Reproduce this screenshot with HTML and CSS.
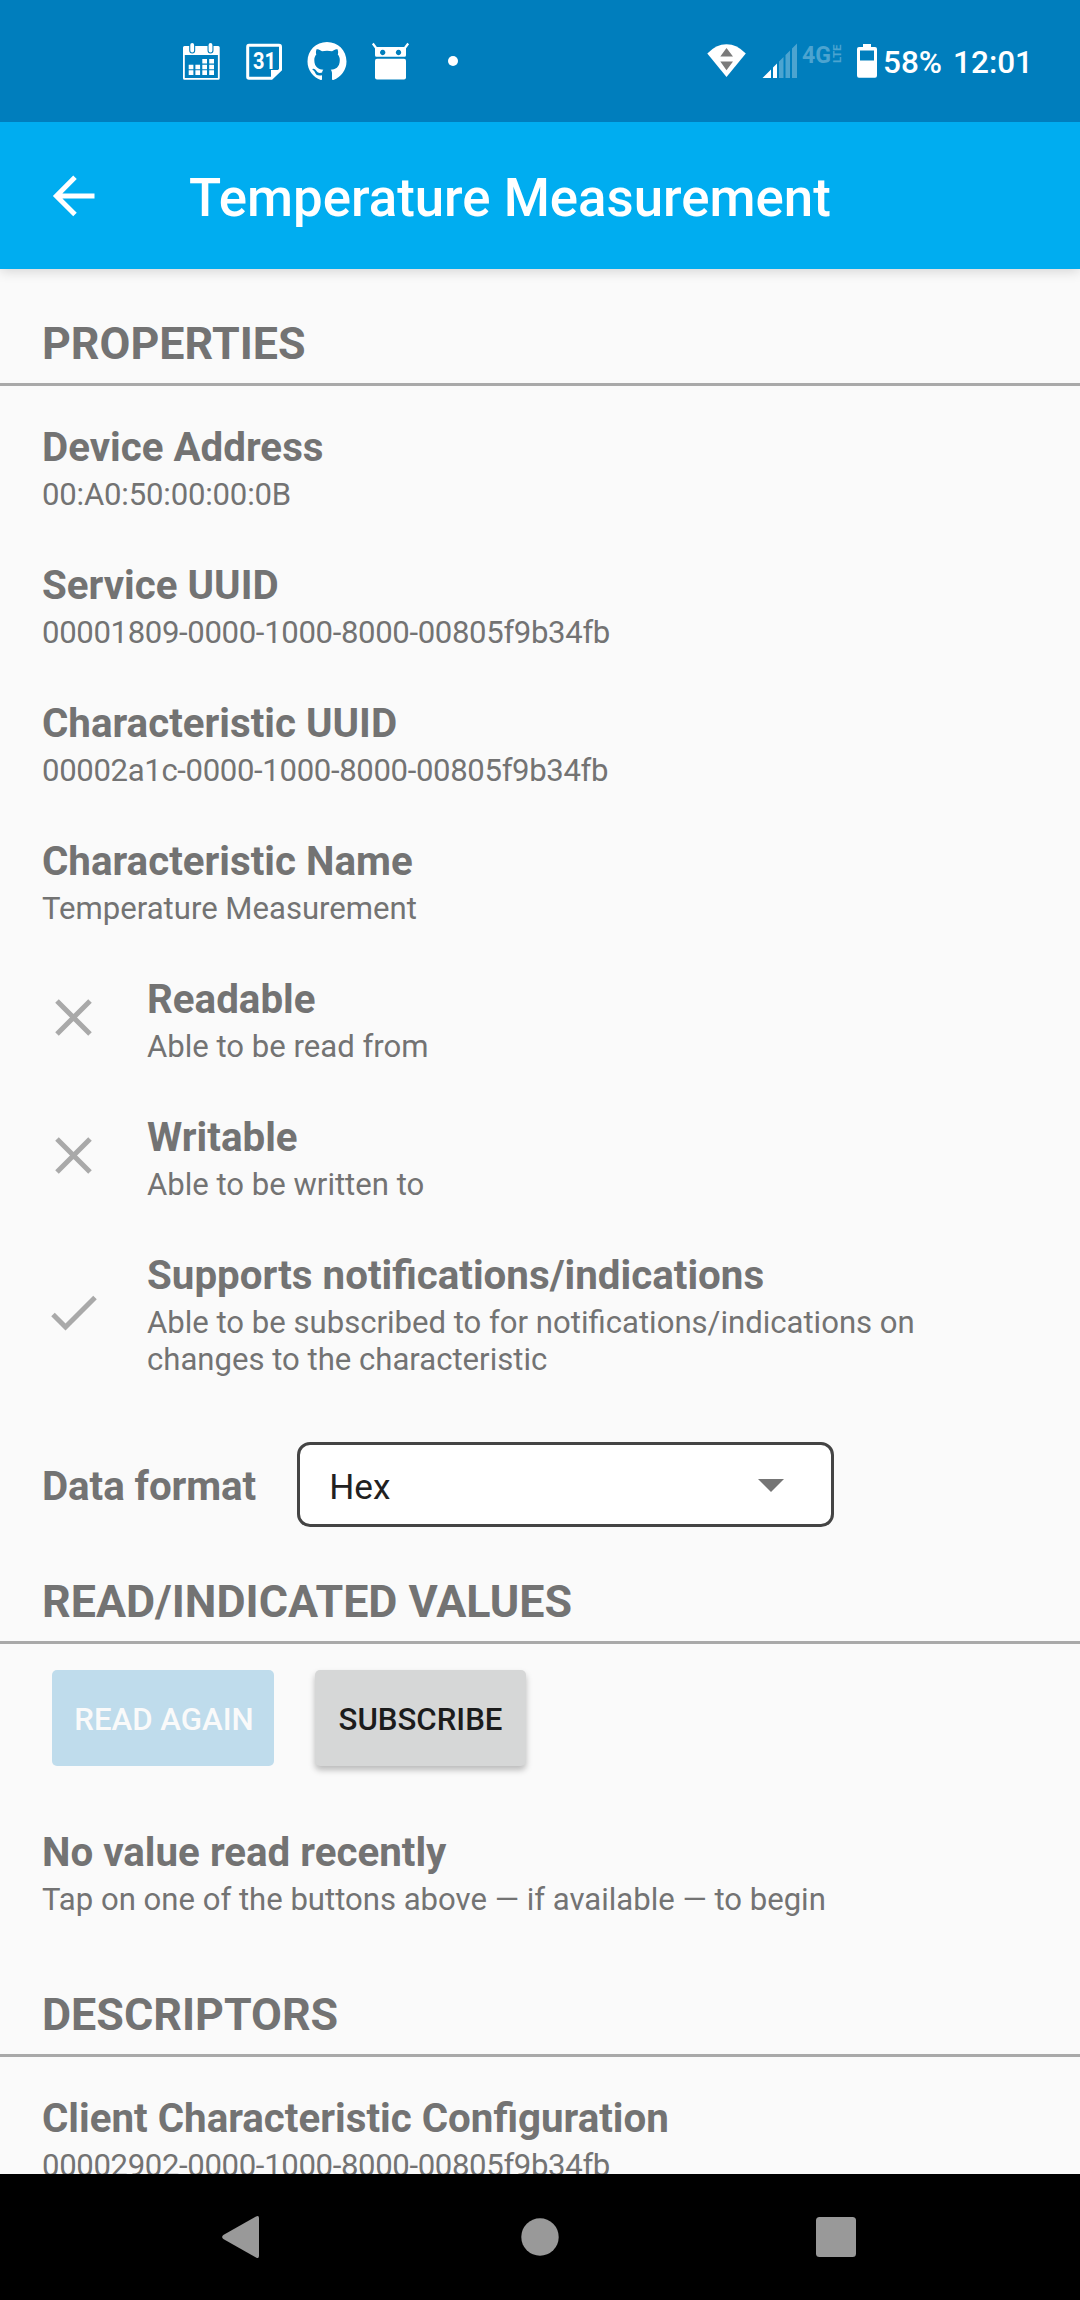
FILE: index.html
```html
<!DOCTYPE html>
<html lang="en">
<head>
<meta charset="utf-8">
<title>Temperature Measurement</title>
<link rel="stylesheet" href="styles.css">
</head>
<body>
<div class="screen">
  <div class="status-bar">
    <div class="notifications">
      <svg width="40" height="40" viewBox="0 0 40 40">
        <path fill="#fff" fill-rule="evenodd" d="M3.500 5H37.200Q38.700 5 38.700 6.500V37.200Q38.700 38.700 37.200 38.700H3.500Q2 38.700 2 37.200V6.500Q2 5 3.500 5ZM3.800 14V37H36.900V14Z"/>
        <path fill="#fff" d="M21.300 18H26v4.500h-4.700zM28.200 18H33v4.500h-4.800zM7.700 23.700h4.700v4.500H7.700zM14.400 23.700h4.700v4.500h-4.700zM21.300 23.700H26v4.500h-4.700zM28.200 23.700H33v4.500h-4.800zM7.700 29.300h4.700V34H7.700zM14.400 29.300h4.700V34h-4.700zM21.300 29.300H26V34h-4.700zM28.200 29.300H33V34h-4.800z"/>
        <path d="M11.200 4V9.500M29.500 4V9.500" stroke="#007ebd" stroke-width="6" stroke-linecap="round"/>
        <path d="M11.200 4V9.500M29.500 4V9.500" stroke="#fff" stroke-width="3.800" stroke-linecap="round"/>
      </svg>
      <svg width="40" height="40" viewBox="0 0 40 40">
        <path d="M5 4.300H35Q36.500 4.300 36.500 6V28.500L27.500 37.300H5Q3.700 37.300 3.700 36V6Q3.700 4.300 5 4.300Z" fill="none" stroke="#fff" stroke-width="3"/>
        <path d="M27 38.500V29H37.500Z" fill="#fff"/>
        <text x="9" y="28.200" class="day" textLength="23" lengthAdjust="spacingAndGlyphs">31</text>
      </svg>
      <svg width="40" height="40" viewBox="0 0 16 16">
        <path fill="#fff" d="M8 .4C3.580.4 .2 3.780 .2 8.200c0 3.540 2.290 6.330 5.270 7.390.4.070.55-.17.55-.38 0-.19-.010-.82-.010-1.490-2.010.37-2.530-.49-2.690-.94-.090-.23-.48-.94-.82-1.130-.28-.15-.68-.52-.010-.53.63-.010 1.080.58 1.230.82.72 1.210 1.870.87 2.330.66.070-.52.28-.87.51-1.070-1.780-.2-3.640-.89-3.640-3.950 0-.87.31-1.590.82-2.150-.080-.2-.36-1.020.080-2.120 0 0 .67-.21 2.200.82.64-.18 1.320-.27 2-.27s1.360.090 2 .27c1.530-1.040 2.200-.82 2.200-.82.44 1.100.16 1.920.080 2.120.51.56.82 1.270.82 2.150 0 3.070-1.870 3.750-3.650 3.950.29.25.54.73.54 1.480 0 1.070-.010 1.930-.010 2.200 0 .21.15.46.55.38A7.900 7.900 0 0 0 15.800 8.200C15.800 3.780 12.420.4 8 .4z"/>
      </svg>
      <svg width="40" height="40" viewBox="0 0 40 40">
        <path d="M2.800 2.500L6.500 7.500M38.200 2.500L34.500 7.500" stroke="#fff" stroke-width="2.200"/>
        <path fill="#fff" fill-rule="evenodd" d="M6.500 6H34.500Q36 6 36 7.500V14.200Q36 15.700 34.500 15.700H6.500Q5 15.700 5 14.200V7.500Q5 6 6.500 6ZM12.700 8.800a2.700 2.700 0 1 0 .01 0ZM28.500 8.800a2.700 2.700 0 1 0 .01 0Z"/>
        <rect x="5" y="17.800" width="31" height="20.700" rx="2" fill="#fff"/>
      </svg>
      <span class="more-dot"></span>
    </div>
    <div class="system">
      <svg width="40" height="36" viewBox="0 0 40 36">
        <path fill="#fff" d="M0.300 10.500Q9 1.200 19.500 1.200T38.800 10.500L19.500 34Z"/>
        <path fill="#7b7b7b" d="M13.300 13.500L19.500 5L26 13.500ZM13.300 18.500H26L19.500 27.300Z"/>
      </svg>
      <svg class="signal" width="36" height="36" viewBox="0 0 36 36">
        <path fill="#fff" d="M0.500 35L9 26.500V35ZM11 24.500L15 20.500V35H11Z"/>
        <path fill="#4ca4d0" d="M17 18.500L21.500 14V35H17ZM23.500 12L28 7.500V35H23.500ZM30 5.500L35 0.500V35H30Z"/>
      </svg>
      <svg class="net" width="42" height="24" viewBox="0 0 42 24">
        <text x="0" y="20" class="net-4g" textLength="29" lengthAdjust="spacingAndGlyphs">4G</text>
        <text transform="translate(39.200 20) rotate(-90)" class="net-lte" textLength="18.500" lengthAdjust="spacingAndGlyphs">LTE</text>
      </svg>
      <svg class="battery" width="20" height="35" viewBox="0 0 20 35">
        <path fill="#fff" fill-rule="evenodd" d="M6 1H14V4H18Q20 4 20 6V32.500Q20 34.700 18 34.700H2Q0 34.700 0 32.500V6Q0 4 2 4H6ZM3 7.500V17.500H17V7.500Z"/>
      </svg>
      <span class="percent">58%</span>
      <span class="clock">12:01</span>
    </div>
  </div>
  <div class="app-bar">
    <svg width="44" height="44" viewBox="0 0 44 44">
      <path d="M24 3.300L5.400 21.900L24 40.500M5.700 21.900H43.500" fill="none" stroke="#fff" stroke-width="5"/>
    </svg>
    <h1 class="title">Temperature Measurement</h1>
  </div>
  <div class="content">
    <h2 class="section">PROPERTIES</h2>
    <div class="list">
      <div class="item"><div class="text"><div class="name">Device Address</div><div class="value address">00:A0:50:00:00:0B</div></div></div>
      <div class="item"><div class="text"><div class="name">Service UUID</div><div class="value code">00001809-0000-1000-8000-00805f9b34fb</div></div></div>
      <div class="item"><div class="text"><div class="name">Characteristic UUID</div><div class="value code">00002a1c-0000-1000-8000-00805f9b34fb</div></div></div>
      <div class="item"><div class="text"><div class="name">Characteristic Name</div><div class="value">Temperature Measurement</div></div></div>
      <div class="item">
        <svg class="mark" width="63" height="63" viewBox="0 0 63 63"><path d="M15 15L48 48M48 15L15 48" stroke="#a9a9a9" stroke-width="5"/></svg>
        <div class="text"><div class="name">Readable</div><div class="value">Able to be read from</div></div>
      </div>
      <div class="item">
        <svg class="mark" width="63" height="63" viewBox="0 0 63 63"><path d="M15 15L48 48M48 15L15 48" stroke="#a9a9a9" stroke-width="5"/></svg>
        <div class="text"><div class="name">Writable</div><div class="value">Able to be written to</div></div>
      </div>
      <div class="item">
        <svg class="mark" width="63" height="63" viewBox="0 0 63 63"><path d="M11 33.500L23.500 46L53 16.500" fill="none" stroke="#a9a9a9" stroke-width="5"/></svg>
        <div class="text"><div class="name">Supports notifications/indications</div><div class="value">Able to be subscribed to for notifications/indications on<br>changes to the characteristic</div></div>
      </div>
    </div>
    <div class="format">
      <span class="name format-label">Data format</span>
      <div class="select"><span class="choice">Hex</span><svg class="caret" width="26" height="13" viewBox="0 0 26 13"><path d="M0 0H26L13 13Z" fill="#757575"/></svg></div>
    </div>
    <h2 class="section">READ/INDICATED VALUES</h2>
    <div class="buttons">
      <button class="btn read" disabled>READ AGAIN</button>
      <button class="btn subscribe">SUBSCRIBE</button>
    </div>
    <div class="item latest"><div class="text"><div class="name">No value read recently</div><div class="value">Tap on one of the buttons above — if available — to begin</div></div></div>
    <h2 class="section">DESCRIPTORS</h2>
    <div class="list">
      <div class="item"><div class="text"><div class="name">Client Characteristic Configuration</div><div class="value code">00002902-0000-1000-8000-00805f9b34fb</div></div></div>
    </div>
  </div>
  <div class="nav-bar">
    <svg width="44" height="44" viewBox="0 0 44 44"><path d="M37 3V41Q37 44 34 42.500L1.300 24Q-1 22 1.300 20L34 1.500Q37 0 37 3Z" fill="#999"/></svg>
    <svg width="44" height="44" viewBox="0 0 44 44"><circle cx="22" cy="22" r="18.700" fill="#999"/></svg>
    <svg width="44" height="44" viewBox="0 0 44 44"><rect x="2" y="2" width="40" height="40" rx="3.500" fill="#999"/></svg>
  </div>
</div>
</body>
</html>
```

FILE: styles.css
```css
* { box-sizing: border-box; }
body { margin: 0; font-family: Roboto, sans-serif; color: #737373; background: #fafafa; }
h1, h2 { margin: 0; }
svg { display: block; flex: none; }
.screen { width: 1080px; height: 2300px; display: flex; flex-direction: column; overflow: hidden; }

.status-bar { height: 122px; flex: none; background: #007ebd; color: #fff; display: flex; justify-content: space-between; padding: 0 47px 0 181px; position: relative; z-index: 2; }
.notifications { display: flex; height: 122px; align-items: center; gap: 23px; }
.day { font: 700 23.500px Roboto, sans-serif; fill: #fff; }
.more-dot { width: 10px; height: 10px; border-radius: 50%; background: #fff; margin-left: 15px; }
.system { display: flex; align-items: flex-start; padding-top: 43px; }
.signal { margin-left: 15px; }
.net { margin-left: 4px; overflow: visible; }
.net-4g { font: 700 24px Roboto, sans-serif; fill: #4ca4d0; }
.net-lte { font: 700 11.500px Roboto, sans-serif; fill: #4ca4d0; }
.battery { margin-left: 13px; }
.percent, .clock { font-size: 31.500px; font-weight: 500; line-height: 37px; padding-top: 1px; }
.percent { margin-left: 6px; }
.clock { margin-left: 11px; }

.app-bar { height: 147px; flex: none; background: #00adf0; color: #fff; display: flex; align-items: center; padding-left: 51px; box-shadow: 0 2px 12px rgba(0, 0, 0, .16); position: relative; z-index: 1; }
.title { font-size: 52.800px; font-weight: 500; line-height: 62px; margin-left: 94px; padding-top: 4px; }

.content { flex: 1; min-height: 0; overflow: hidden; }
.section { font-size: 44.800px; font-weight: 700; line-height: 52px; padding: 49px 42px 13px; border-bottom: 3px solid #a9a9a9; }
.list { padding: 37px 42px 0; display: flex; flex-direction: column; gap: 48px; }
.item { display: flex; align-items: center; }
.mark { margin: 0 42px 5px 0; }
.name { font-size: 40.300px; font-weight: 700; line-height: 49px; }
.value { font-size: 31.100px; line-height: 37px; margin-top: 4px; }
.code { letter-spacing: -.34px; }
.address { letter-spacing: -.18px; }

.format { display: flex; align-items: center; gap: 41px; padding: 64px 42px 0; }
.format-label { padding-top: 3px; letter-spacing: -.08px; }
.select { width: 537px; height: 85px; border: 3px solid #444; border-radius: 13px; background: #fff; color: #212121; display: flex; align-items: center; justify-content: space-between; padding: 0 47px 0 29px; font-size: 35.200px; }
.choice { padding-top: 4px; }
.caret { margin-top: 2px; }
.buttons { display: flex; gap: 41px; padding: 26px 52px 0; }
.btn { height: 96px; border: 0; border-radius: 5px; font: 500 31.200px Roboto, sans-serif; padding: 2px 0 0; }
.read { width: 222px; padding-left: 2px; background: #bfdcec; color: #fafafa; }
.subscribe { width: 211px; background: #d6d7d7; color: #1c1c1c; box-shadow: 0 4px 6px rgba(0, 0, 0, .26); }
.latest { padding: 62px 42px 22px; }

.nav-bar { height: 126px; flex: none; background: #000; display: flex; align-items: center; justify-content: center; gap: 252px; }
```
